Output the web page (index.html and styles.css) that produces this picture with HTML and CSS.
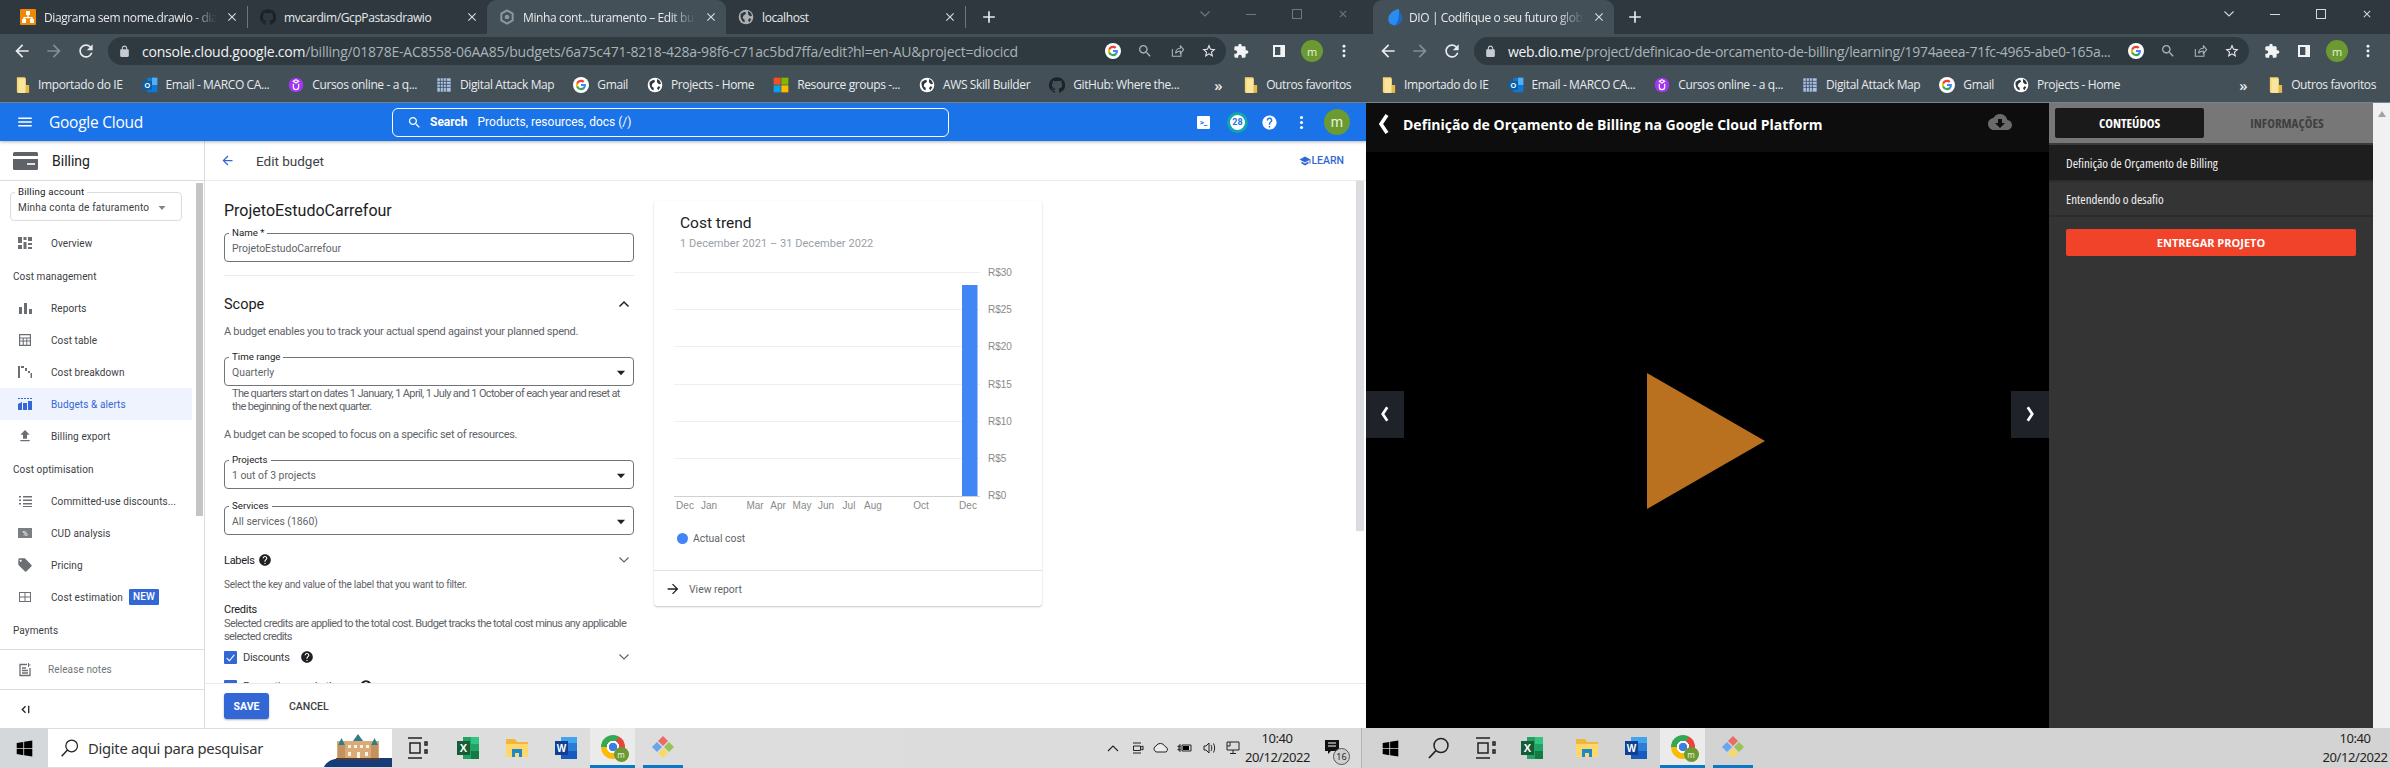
FILE: index.html
```html
<!DOCTYPE html>
<html lang="pt-BR">
<head>
  <meta charset="UTF-8" />
  <title>Billing - DIO</title>
  <link rel="stylesheet" href="styles.css">
</head>
<body>

  <!-- shared icons -->
  <svg class="sprite" width="0" height="0">
    <symbol id="i-menu" viewBox="0 0 24 24"><path d="M3 18h18v-2H3v2zm0-5h18v-2H3v2zm0-7v2h18V6H3z"/></symbol>
    <symbol id="i-back" viewBox="0 0 24 24"><path d="M20 11H7.83l5.59-5.59L12 4l-8 8 8 8 1.41-1.41L7.83 13H20v-2z"/></symbol>
    <symbol id="i-forward" viewBox="0 0 24 24"><path d="M12 4l-1.41 1.41L16.17 11H4v2h12.17l-5.58 5.59L12 20l8-8z"/></symbol>
    <symbol id="i-reload" viewBox="0 0 24 24"><path d="M17.65 6.35A7.958 7.958 0 0 0 12 4c-4.42 0-7.99 3.58-7.99 8s3.57 8 7.99 8c3.73 0 6.84-2.55 7.73-6h-2.08A5.99 5.99 0 0 1 12 18c-3.31 0-6-2.69-6-6s2.69-6 6-6c1.66 0 3.14.69 4.22 1.78L13 11h7V4l-2.35 2.35z"/></symbol>
    <symbol id="i-lock" viewBox="0 0 24 24"><path d="M18 8h-1V6c0-2.76-2.24-5-5-5S7 3.24 7 6v2H6c-1.1 0-2 .9-2 2v10c0 1.1.9 2 2 2h12c1.1 0 2-.9 2-2V10c0-1.1-.9-2-2-2zM9 6c0-1.66 1.34-3 3-3s3 1.34 3 3v2H9V6z"/></symbol>
    <symbol id="i-close" viewBox="0 0 24 24"><path d="M19 6.41L17.59 5 12 10.59 6.41 5 5 6.41 10.59 12 5 17.59 6.41 19 12 13.41 17.59 19 19 17.59 13.41 12z"/></symbol>
    <symbol id="i-plus" viewBox="0 0 24 24"><path d="M19 13h-6v6h-2v-6H5v-2h6V5h2v6h6v2z"/></symbol>
    <symbol id="i-star" viewBox="0 0 24 24"><path d="M22 9.24l-7.19-.62L12 2 9.19 8.63 2 9.24l5.46 4.73L5.82 21 12 17.27 18.18 21l-1.63-7.03L22 9.24zM12 15.4l-3.76 2.27 1-4.28-3.32-2.88 4.38-.38L12 6.1l1.71 4.04 4.38.38-3.32 2.88 1 4.28L12 15.4z"/></symbol>
    <symbol id="i-puzzle" viewBox="0 0 24 24"><path d="M20.5 11H19V7c0-1.1-.9-2-2-2h-4V3.5C13 2.12 11.88 1 10.5 1S8 2.12 8 3.5V5H4c-1.1 0-1.99.9-1.99 2v3.8H3.5c1.49 0 2.7 1.21 2.7 2.7s-1.21 2.7-2.7 2.7H2V20c0 1.1.9 2 2 2h3.8v-1.5c0-1.49 1.21-2.7 2.7-2.7 1.49 0 2.7 1.21 2.7 2.7V22H17c1.1 0 2-.9 2-2v-4h1.5c1.38 0 2.5-1.12 2.5-2.5S21.88 11 20.5 11z"/></symbol>
    <symbol id="i-search" viewBox="0 0 24 24"><path d="M15.5 14h-.79l-.28-.27C15.41 12.59 16 11.11 16 9.5 16 5.91 13.09 3 9.5 3S3 5.91 3 9.5 5.91 16 9.5 16c1.61 0 3.09-.59 4.23-1.57l.27.28v.79l5 4.99L20.49 19l-4.99-5zm-6 0C7.01 14 5 11.99 5 9.5S7.01 5 9.5 5 14 7.01 14 9.5 11.99 14 9.5 14z"/></symbol>
    <symbol id="i-share" viewBox="0 0 24 24"><path d="M5 9v11h13v-5M10 15c0-4 3-7 7-7V4l5 6-5 6v-4c-3 0-5 1-7 3z" fill="none" stroke="currentColor" stroke-width="1.6" stroke-linejoin="round"/></symbol>
    <symbol id="i-panel" viewBox="0 0 24 24"><path d="M3 3h18v18H3zM14 6H6v12h8z" fill-rule="evenodd"/></symbol>
    <symbol id="i-dots" viewBox="0 0 24 24"><circle cx="12" cy="5" r="2.2"/><circle cx="12" cy="12" r="2.2"/><circle cx="12" cy="19" r="2.2"/></symbol>
    <symbol id="i-folder" viewBox="0 0 16 20"><path fill="#f6d776" d="M1 1h9l1 1v17H2l-1-1z"/><path fill="#e8b94a" d="M11 10l4 0v9H11z"/><path fill="#fbe59a" d="M3 3h8v16H3z"/></symbol>
    <symbol id="i-outlook" viewBox="0 0 24 24"><rect x="8" y="1" width="15" height="22" rx="1" fill="#0f78d4"/><rect x="15" y="1" width="8" height="11" fill="#50b0f0"/><rect x="1" y="6" width="14" height="13" fill="#0a5fa8"/><text x="8" y="16" text-anchor="middle" font-size="11" font-weight="700" fill="#fff" font-family="Liberation Sans">O</text></symbol>
    <symbol id="i-udemy" viewBox="0 0 24 24"><circle cx="12" cy="12" r="11" fill="#a435f0"/><path d="M8 10v5a4 4 0 0 0 8 0v-5M12 4l4 2.5-4 2.5-4-2.5z" fill="none" stroke="#fff" stroke-width="1.8"/></symbol>
    <symbol id="i-grid" viewBox="0 0 24 24"><path d="M2 2h20v20H2z" fill="#a9c4ea"/><path d="M6.5 2v20M11 2v20M15.5 2v20M2 6.5h20M2 11h20M2 15.5h20" stroke="#435058" stroke-width="1.3"/></symbol>
    <symbol id="i-g" viewBox="0 0 24 24"><circle cx="12" cy="12" r="12" fill="#fff"/><g transform="translate(3.6 3.6) scale(.7)"><path fill="#4285F4" d="M22.56 12.25c0-.78-.07-1.53-.2-2.25H12v4.26h5.92c-.26 1.37-1.04 2.53-2.21 3.31v2.77h3.57c2.08-1.92 3.28-4.74 3.28-8.09z"/><path fill="#34A853" d="M12 23c2.97 0 5.46-.98 7.28-2.66l-3.57-2.77c-.98.66-2.23 1.06-3.71 1.06-2.86 0-5.29-1.93-6.16-4.53H2.18v2.84C3.99 20.53 7.7 23 12 23z"/><path fill="#FBBC05" d="M5.84 14.09c-.22-.66-.35-1.36-.35-2.09s.13-1.43.35-2.09V7.07H2.18C1.43 8.55 1 10.22 1 12s.43 3.45 1.18 4.93l3.66-2.84z"/><path fill="#EA4335" d="M12 5.38c1.62 0 3.06.56 4.21 1.64l3.15-3.15C17.45 2.09 14.97 1 12 1 7.7 1 3.99 3.47 2.18 7.07l3.66 2.84c.87-2.6 3.3-4.53 6.16-4.53z"/></g></symbol>
    <symbol id="i-globe" viewBox="0 0 24 24"><circle cx="12" cy="12" r="11" fill="#fff"/><path fill="#2e383e" d="M4 7c3-1 4-3 7-3l1 3-4 3-1 4 3 2v4c-4-1-7-6-6-13zM15 3c3 1 5 3 6 7l-3 1-3-3zM17 14l3 1-3 5-2-3z"/></symbol>
    <symbol id="i-github" viewBox="0 0 24 24"><path d="M12 .3a12 12 0 0 0-3.8 23.4c.6.1.8-.3.8-.6v-2.2c-3.3.7-4-1.4-4-1.4-.6-1.4-1.4-1.8-1.4-1.8-1-.7.1-.7.1-.7 1.2.1 1.9 1.2 1.9 1.2 1.1 1.8 2.8 1.3 3.5 1 .1-.8.4-1.3.8-1.6-2.7-.3-5.5-1.3-5.5-6 0-1.2.5-2.3 1.3-3.1-.2-.4-.6-1.6 0-3.2 0 0 1-.3 3.4 1.2a11.5 11.5 0 0 1 6 0c2.3-1.5 3.3-1.2 3.3-1.2.6 1.6.2 2.8.1 3.2.8.8 1.3 1.9 1.3 3.2 0 4.6-2.8 5.6-5.5 5.9.5.4.9 1 .9 2.2v3.3c0 .3.2.7.8.6A12 12 0 0 0 12 .3z"/></symbol>
    <symbol id="i-ms" viewBox="0 0 24 24"><path fill="#f25022" d="M1 1h10.5v10.5H1z"/><path fill="#7fba00" d="M12.5 1H23v10.5H12.5z"/><path fill="#00a4ef" d="M1 12.5h10.5V23H1z"/><path fill="#ffb900" d="M12.5 12.5H23V23H12.5z"/></symbol>
    <symbol id="i-help" viewBox="0 0 24 24"><path d="M12 2C6.48 2 2 6.48 2 12s4.48 10 10 10 10-4.48 10-10S17.52 2 12 2zm1 17h-2v-2h2v2zm2.07-7.75l-.9.92C13.45 12.9 13 13.5 13 15h-2v-.5c0-1.1.45-2.1 1.17-2.83l1.24-1.26c.37-.36.59-.86.59-1.41 0-1.1-.9-2-2-2s-2 .9-2 2H8c0-2.21 1.79-4 4-4s4 1.79 4 4c0 .88-.36 1.68-.93 2.25z"/></symbol>
    <symbol id="i-caret" viewBox="0 0 24 24"><path d="M5 8h14l-7 8z"/></symbol>
    <symbol id="i-chev-down" viewBox="0 0 24 24"><path d="M3 7l9 9 9-9" fill="none" stroke="currentColor" stroke-width="2.2"/></symbol>
    <symbol id="i-chev-up" viewBox="0 0 24 24"><path d="M3 17l9-9 9 9" fill="none" stroke="currentColor" stroke-width="3"/></symbol>
    <symbol id="i-left" viewBox="0 0 12 24"><path d="M9 3L3 12l6 9" fill="none" stroke="currentColor" stroke-width="3.6"/></symbol>
    <symbol id="i-right" viewBox="0 0 12 24"><path d="M3 3l6 9-6 9" fill="none" stroke="currentColor" stroke-width="3.6"/></symbol>
    <symbol id="i-win" viewBox="0 0 24 24"><path d="M1 4.200l9.300-1.500v8.800H1zM11.500 2.500L23 .8v10.700H11.500zM1 12.600h9.300v8.800L1 19.900zM11.500 12.600H23v10.600l-11.500-1.700z"/></symbol>
    <symbol id="i-lens" viewBox="0 0 24 24"><circle cx="14" cy="9.5" r="7" fill="none" stroke="currentColor" stroke-width="1.5"/><path d="M9 14.5L2 22" stroke="currentColor" stroke-width="1.8"/></symbol>
    <symbol id="i-taskview" viewBox="0 0 24 24"><path d="M3 2h14M3 22h14M5 7h10v10H5zM20 6h2v3h-2zM20 14h2v3h-2z" fill="none" stroke="currentColor" stroke-width="1.5"/></symbol>
    <symbol id="i-excel" viewBox="0 0 24 24"><path fill="#21a366" d="M7 1h16v22H7z"/><path fill="#33c481" d="M15 1h8v7h-8z"/><path fill="#107c41" d="M15 15h8v8h-8z"/><path fill="#185c37" d="M1 5h13v14H1z"/><text x="7.5" y="16" text-anchor="middle" font-size="11" font-weight="700" fill="#fff" font-family="Liberation Sans">X</text></symbol>
    <symbol id="i-word" viewBox="0 0 24 24"><path fill="#2b7cd3" d="M7 1h16v22H7z"/><path fill="#41a5ee" d="M7 1h16v6H7z"/><path fill="#185abd" d="M7 15h16v8H7z"/><path fill="#103f91" d="M1 5h13v14H1z"/><text x="7.5" y="16" text-anchor="middle" font-size="10" font-weight="700" fill="#fff" font-family="Liberation Sans">W</text></symbol>
    <symbol id="i-explorer" viewBox="0 0 24 24"><path fill="#f0b73b" d="M1 3h9l2 3h11v15H1z"/><path fill="#ffd86b" d="M1 8h22v13H1z"/><path fill="#1e88c9" d="M7 13h10v8h-3v-4h-4v4H7z"/></symbol>
    <symbol id="i-gapp" viewBox="0 0 24 24"><path fill="#ea6b66" d="M12 1l5 5-5 5-5-5z"/><path fill="#6aa5ed" d="M6 7l5 5-5 5-5-5z"/><path fill="#97c459" d="M18 7l5 5-5 5-5-5z"/><path fill="#f6d96b" d="M12 13l5 5-5 5-5-5z"/></symbol>
    <symbol id="i-drawio" viewBox="0 0 24 24"><rect width="24" height="24" rx="1.5" fill="#f08705"/><path d="M9 3h6v6h-2v3h6v3h2v6h-6v-6h2v-1H7v1h2v6H3v-6h2v-3h6V9H9z" fill="#fff"/></symbol>
    <symbol id="i-gcp" viewBox="0 0 24 24"><path d="M12 2l8.500 5v10L12 22l-8.500-5V7z" fill="none" stroke="currentColor" stroke-width="3"/><circle cx="12" cy="12" r="3.500" fill="currentColor"/></symbol>
    <symbol id="i-dio" viewBox="0 0 24 24"><path fill="#2b8cf0" d="M17 1C10 3 3 8 3 15c0 5 4 8 9 8s9-4 9-9c0-5-3-7-4-13z"/><path fill="#1b64c8" d="M17 1c1 6 4 8 4 13 0 5-4 9-9 9 5-4 6-14 5-22z"/></symbol>
  </svg>

  <div class="screen">

    <!-- janela esquerda -->
    <section class="window">
      <div class="tabstrip tabstrip-left">
        <div class="tab">
          <svg class="favicon"><use href="#i-drawio"/></svg>
          <span class="tab-title tab-fade">Diagrama sem nome.drawio - dia</span>
          <svg class="tab-close"><use href="#i-close"/></svg>
        </div>
        <span class="tab-sep"></span>
        <div class="tab">
          <svg class="favicon fav-dark"><use href="#i-github"/></svg>
          <span class="tab-title">mvcardim/GcpPastasdrawio</span>
          <svg class="tab-close"><use href="#i-close"/></svg>
        </div>
        <div class="tab tab-active">
          <svg class="favicon fav-gray"><use href="#i-gcp"/></svg>
          <span class="tab-title tab-fade">Minha cont...turamento – Edit bu</span>
          <svg class="tab-close"><use href="#i-close"/></svg>
        </div>
        <div class="tab">
          <svg class="favicon fav-dim"><use href="#i-globe"/></svg>
          <span class="tab-title">localhost</span>
          <svg class="tab-close"><use href="#i-close"/></svg>
        </div>
        <span class="tab-sep"></span>
        <svg class="tab-new"><use href="#i-plus"/></svg>
        <div class="win-controls win-dim">
          <svg class="win-btn"><use href="#i-chev-down"/></svg>
          <span class="win-min"></span>
          <span class="win-max"></span>
          <svg class="win-btn"><use href="#i-close"/></svg>
        </div>
      </div>

      <div class="toolbar">
        <svg class="nav-ic"><use href="#i-back"/></svg>
        <svg class="nav-ic nav-off"><use href="#i-forward"/></svg>
        <svg class="nav-ic"><use href="#i-reload"/></svg>
        <div class="omnibox">
          <svg class="omni-lock"><use href="#i-lock"/></svg>
          <span class="url"><b>console.cloud.google.com</b>/billing/01878E-AC8558-06AA85/budgets/6a75c471-8218-428a-98f6-c71ac5bd7ffa/edit?hl=en-AU&amp;project=diocicd</span>
          <svg class="omni-ic"><use href="#i-g"/></svg>
          <svg class="omni-ic omni-dim"><use href="#i-search"/></svg>
          <svg class="omni-ic omni-dim"><use href="#i-share"/></svg>
          <svg class="omni-ic"><use href="#i-star"/></svg>
        </div>
        <svg class="tool-ic tool-puzzle"><use href="#i-puzzle"/></svg>
        <svg class="tool-ic tool-panel"><use href="#i-panel"/></svg>
        <span class="avatar">m</span>
        <svg class="tool-ic tool-dots"><use href="#i-dots"/></svg>
      </div>

      <div class="bookmarks">
        <svg class="bm-folder"><use href="#i-folder"/></svg><span class="bm-text bm-first">Importado do IE</span>
        <svg class="bm-ic"><use href="#i-outlook"/></svg><span class="bm-text">Email - MARCO CA...</span>
        <svg class="bm-ic"><use href="#i-udemy"/></svg><span class="bm-text">Cursos online - a q...</span>
        <svg class="bm-ic"><use href="#i-grid"/></svg><span class="bm-text">Digital Attack Map</span>
        <svg class="bm-ic"><use href="#i-g"/></svg><span class="bm-text">Gmail</span>
        <svg class="bm-ic"><use href="#i-globe"/></svg><span class="bm-text">Projects - Home</span>
        <svg class="bm-ic"><use href="#i-ms"/></svg><span class="bm-text">Resource groups -...</span>
        <svg class="bm-ic"><use href="#i-globe"/></svg><span class="bm-text">AWS Skill Builder</span>
        <svg class="bm-ic"><use href="#i-github"/></svg><span class="bm-text">GitHub: Where the...</span>
        <span class="bm-more">»</span>
        <span class="bm-sep"></span>
        <svg class="bm-folder"><use href="#i-folder"/></svg><span class="bm-text">Outros favoritos</span>
      </div>

      <div class="gcp">
        <header class="gcp-top">
          <svg class="gcp-menu"><use href="#i-menu"/></svg>
          <span class="gcp-logo">Google Cloud</span>
          <div class="gcp-search">
            <svg class="gcp-search-ic"><use href="#i-search"/></svg>
            <b>Search</b><span>Products, resources, docs (/)</span>
          </div>
          <div class="gcp-actions">
            <span class="gcp-term">&gt;_</span>
            <span class="gcp-badge">28</span>
            <svg class="gcp-ic"><use href="#i-help"/></svg>
            <svg class="gcp-ic"><use href="#i-dots"/></svg>
            <span class="gcp-avatar">m</span>
          </div>
        </header>

        <div class="gcp-body">
          <aside class="sidebar">
            <div class="side-head">
              <svg class="side-head-ic" viewBox="0 0 25 18"><rect width="25" height="18" rx="1.500" fill="#5f6368"/><rect y="4" width="25" height="3" fill="#fff"/><rect x="14" y="11" width="8" height="2" fill="#fff" opacity=".8"/></svg>
              <span>Billing</span>
            </div>
            <div class="side-scroll">
              <div class="side-list">
                <div class="field field-account">
                  <span class="field-label">Billing account</span>
                  <span class="field-value">Minha conta de faturamento</span>
                  <svg class="caret caret-gray"><use href="#i-caret"/></svg>
                </div>
                <a class="side-item">
                  <svg class="side-ic" viewBox="0 0 16 16"><path d="M1 2h4v6H1zM1 10h4v4H1zM6.500 2h3v3h-3zM6.500 7h3v7h-3zM11 2h4v4h-4zM11 8h4v2h-4zM11 12h4v2h-4z"/></svg>Overview</a>
                <div class="side-group">Cost management</div>
                <a class="side-item">
                  <svg class="side-ic" viewBox="0 0 16 16"><path d="M2 7h3v7H2zM7 3h3v11H7zM12 9h3v5h-3z"/></svg>Reports</a>
                <a class="side-item">
                  <svg class="side-ic" viewBox="0 0 16 16"><path fill-rule="evenodd" d="M2 2h12v12H2zM3.200 3.200v2.200h9.600V3.200zM3.200 6.500v2h2.500v-2zm3.600 0v2h2.500v-2zm3.500 0v2h2.500v-2zM3.200 9.500v3.300h2.500V9.500zm3.600 0v3.300h2.500V9.500zm3.500 0v3.300h2.500V9.500z"/></svg>Cost table</a>
                <a class="side-item">
                  <svg class="side-ic" viewBox="0 0 16 16"><path d="M1 2h2v12H1zM4 2h3v2H4zM8 4h2v3H8zM11 7h2v2h-2zM13.500 9H15v5h-1.500z"/></svg>Cost breakdown</a>
                <a class="side-item side-active">
                  <svg class="side-ic" viewBox="0 0 16 16"><path d="M1 8l4-2v8H1zM6 7h4v7H6zM11 5h4v9h-4zM1 2h2v1H1zM4 2h2v1H4zM7 2h2v1H7zM10 2h2v1h-2zM13 2h2v1h-2z"/></svg>Budgets &amp; alerts</a>
                <a class="side-item">
                  <svg class="side-ic" viewBox="0 0 24 24"><path d="M9 16h6v-6h4l-7-7-7 7h4zm-4 2h14v2H5z"/></svg>Billing export</a>
                <div class="side-group">Cost optimisation</div>
                <a class="side-item">
                  <svg class="side-ic" viewBox="0 0 16 16"><path d="M2 3h2v1.500H2zM6 3h9v1.500H6zM2 6.500h2V8H2zM6 6.500h9V8H6zM2 10h2v1.500H2zM6 10h9v1.500H6zM6 13h9v1H6z"/></svg>Committed-use discounts...</a>
                <a class="side-item">
                  <svg class="side-ic" viewBox="0 0 16 16"><rect x="1" y="3" width="14" height="10" fill="#7b7e82"/><text x="8" y="11" text-anchor="middle" font-size="7.500" fill="#fff" font-family="Roboto">%</text></svg>CUD analysis</a>
                <a class="side-item">
                  <svg class="side-ic" viewBox="0 0 24 24"><path d="M21.410 11.580l-9-9C12.050 2.220 11.550 2 11 2H4c-1.100 0-2 .9-2 2v7c0 .55.22 1.050.59 1.420l9 9c.36.36.86.58 1.410.58.55 0 1.050-.22 1.410-.59l7-7c.37-.36.59-.86.59-1.410 0-.55-.23-1.060-.59-1.420zM5.500 7C4.670 7 4 6.330 4 5.500S4.670 4 5.500 4 7 4.670 7 5.500 6.330 7 5.500 7z"/></svg>Pricing</a>
                <a class="side-item">
                  <svg class="side-ic" viewBox="0 0 16 16"><path fill-rule="evenodd" d="M2 3h12v10H2zM3 4v3.500h4.500V4zm5.500 0v3.500H13V4zM3 8.500V12h4.500V8.500zm5.500 0V12H13V8.500z"/></svg>Cost estimation<span class="badge-new">NEW</span></a>
                <div class="side-group">Payments</div>
              </div>
              <div class="side-thumb"></div>
            </div>
            <a class="side-foot side-notes">
              <svg class="side-ic" viewBox="0 0 16 16"><path fill="none" stroke="currentColor" stroke-width="1.300" d="M10 2.500H3v11h10V6M5 6h4M5 8.500h6M5 11h6"/><path d="M12 1v1.500h1.500v1H12V5h-1V1z"/></svg>Release notes</a>
            <div class="side-foot side-collapse"><svg class="collapse-ic" viewBox="0 0 12 12"><path d="M6 2.500L2.500 6 6 9.500M9.500 2v8" fill="none" stroke="currentColor" stroke-width="1.400"/></svg></div>
          </aside>

          <main class="main">
            <div class="main-head">
              <svg class="main-back"><use href="#i-back"/></svg>
              <span class="main-title">Edit budget</span>
              <a class="learn"><svg class="learn-ic" viewBox="0 0 24 24"><path d="M5 13.180v4L12 21l7-3.820v-4L12 17l-7-3.820zM12 3L1 9l11 6 9-4.910V17h2V9L12 3z"/></svg>LEARN</a>
            </div>

            <div class="main-scroll">
              <form class="budget-form">
                <h1 class="form-title">ProjetoEstudoCarrefour</h1>
                <div class="field field-name">
                  <span class="field-label">Name *</span>
                  <span class="field-value">ProjetoEstudoCarrefour</span>
                </div>
                <hr class="form-line">
                <div class="row-between scope-head">
                  <h2 class="scope-title">Scope</h2>
                  <svg class="chev chev-up"><use href="#i-chev-up"/></svg>
                </div>
                <p class="form-text scope-text">A budget enables you to track your actual spend against your planned spend.</p>
                <div class="field field-time">
                  <span class="field-label">Time range</span>
                  <span class="field-value">Quarterly</span>
                  <svg class="caret"><use href="#i-caret"/></svg>
                </div>
                <p class="form-hint">The quarters start on dates 1 January, 1 April, 1 July and 1 October of each year and reset at the beginning of the next quarter.</p>
                <p class="form-text scoped-text">A budget can be scoped to focus on a specific set of resources.</p>
                <div class="field field-projects">
                  <span class="field-label">Projects</span>
                  <span class="field-value">1 out of 3 projects</span>
                  <svg class="caret"><use href="#i-caret"/></svg>
                </div>
                <div class="field field-services">
                  <span class="field-label">Services</span>
                  <span class="field-value">All services (1860)</span>
                  <svg class="caret"><use href="#i-caret"/></svg>
                </div>
                <div class="row-between labels-row">
                  <span class="labels-title">Labels <svg class="help"><use href="#i-help"/></svg></span>
                  <svg class="chev"><use href="#i-chev-down"/></svg>
                </div>
                <p class="form-text labels-text">Select the key and value of the label that you want to filter.</p>
                <div class="credits-title">Credits</div>
                <p class="form-credit">Selected credits are applied to the total cost. Budget tracks the total cost minus any applicable selected credits</p>
                <div class="row-between check-row">
                  <span class="check-label"><span class="check"><svg viewBox="0 0 12 12"><path d="M2.500 6.500l2.500 2.500 4.500-5.500" fill="none" stroke="#fff" stroke-width="1"/></svg></span>Discounts<svg class="help help-gap"><use href="#i-help"/></svg></span>
                  <svg class="chev"><use href="#i-chev-down"/></svg>
                </div>
                <div class="row-between check-row check-next">
                  <span class="check-label"><span class="check"></span>Promotions and others<svg class="help help-gap"><use href="#i-help"/></svg></span>
                  <svg class="chev"><use href="#i-chev-down"/></svg>
                </div>
              </form>

              <div class="trend-card">
                <h3 class="trend-title">Cost trend</h3>
                <div class="trend-date">1 December 2021 – 31 December 2022</div>
                <svg class="trend-chart" viewBox="0 0 388 250" width="388" height="250">
                  <g stroke="#efefef"><path d="M20 4.500h306M20 41.500h306M20 78.500h306M20 116.500h306M20 153.500h306M20 190.500h306"/></g>
                  <path d="M20 228.500h306" stroke="#d0d0d0"/>
                  <rect x="308" y="17" width="15.500" height="211" fill="#4285f4"/>
                  <g class="axis-y">
                    <text x="334" y="8">R$30</text><text x="334" y="45">R$25</text><text x="334" y="82">R$20</text>
                    <text x="334" y="120">R$15</text><text x="334" y="157">R$10</text><text x="334" y="194">R$5</text><text x="334" y="231">R$0</text>
                  </g>
                  <g class="axis-x">
                    <text x="31" y="241">Dec</text><text x="55" y="241">Jan</text><text x="101" y="241">Mar</text><text x="124" y="241">Apr</text><text x="148" y="241">May</text>
                    <text x="172" y="241">Jun</text><text x="195" y="241">Jul</text><text x="219" y="241">Aug</text><text x="267" y="241">Oct</text><text x="314" y="241">Dec</text>
                  </g>
                </svg>
                <div class="trend-legend"><span class="legend-dot"></span>Actual cost</div>
                <div class="trend-foot">
                  <svg class="trend-arrow"><use href="#i-forward"/></svg>
                  <span>View report</span>
                </div>
              </div>

              <div class="main-thumb"></div>
            </div>

            <div class="main-foot">
              <button class="btn-save" type="button">SAVE</button>
              <button class="btn-cancel" type="button">CANCEL</button>
            </div>
          </main>
        </div>
      </div>
    </section>

    <!-- janela direita -->
    <section class="window window-right">
      <div class="tabstrip tabstrip-right">
        <div class="tab tab-active tab-dio">
          <svg class="favicon"><use href="#i-dio"/></svg>
          <span class="tab-title tab-fade">DIO | Codifique o seu futuro glob</span>
          <svg class="tab-close"><use href="#i-close"/></svg>
        </div>
        <svg class="tab-new tab-new-dio"><use href="#i-plus"/></svg>
        <div class="win-controls">
          <svg class="win-btn"><use href="#i-chev-down"/></svg>
          <span class="win-min"></span>
          <span class="win-max"></span>
          <svg class="win-btn"><use href="#i-close"/></svg>
        </div>
      </div>

      <div class="toolbar">
        <svg class="nav-ic"><use href="#i-back"/></svg>
        <svg class="nav-ic nav-off"><use href="#i-forward"/></svg>
        <svg class="nav-ic"><use href="#i-reload"/></svg>
        <div class="omnibox">
          <svg class="omni-lock"><use href="#i-lock"/></svg>
          <span class="url"><b>web.dio.me</b>/project/definicao-de-orcamento-de-billing/learning/1974aeea-71fc-4965-abe0-165a...</span>
          <svg class="omni-ic"><use href="#i-g"/></svg>
          <svg class="omni-ic omni-dim"><use href="#i-search"/></svg>
          <svg class="omni-ic omni-dim"><use href="#i-share"/></svg>
          <svg class="omni-ic"><use href="#i-star"/></svg>
        </div>
        <svg class="tool-ic tool-puzzle"><use href="#i-puzzle"/></svg>
        <svg class="tool-ic tool-panel"><use href="#i-panel"/></svg>
        <span class="avatar">m</span>
        <svg class="tool-ic tool-dots"><use href="#i-dots"/></svg>
      </div>

      <div class="bookmarks">
        <svg class="bm-folder"><use href="#i-folder"/></svg><span class="bm-text bm-first">Importado do IE</span>
        <svg class="bm-ic"><use href="#i-outlook"/></svg><span class="bm-text">Email - MARCO CA...</span>
        <svg class="bm-ic"><use href="#i-udemy"/></svg><span class="bm-text">Cursos online - a q...</span>
        <svg class="bm-ic"><use href="#i-grid"/></svg><span class="bm-text">Digital Attack Map</span>
        <svg class="bm-ic"><use href="#i-g"/></svg><span class="bm-text">Gmail</span>
        <svg class="bm-ic"><use href="#i-globe"/></svg><span class="bm-text">Projects - Home</span>
        <span class="bm-more">»</span>
        <span class="bm-sep"></span>
        <svg class="bm-folder"><use href="#i-folder"/></svg><span class="bm-text">Outros favoritos</span>
      </div>

      <div class="dio">
        <div class="dio-player">
          <div class="dio-head">
            <svg class="dio-back"><use href="#i-left"/></svg>
            <span class="dio-title">Definição de Orçamento de Billing na Google Cloud Platform</span>
            <svg class="dio-cloud" viewBox="0 0 24 24"><path d="M19.350 10.040C18.670 6.590 15.640 4 12 4 9.110 4 6.600 5.640 5.350 8.040 2.340 8.360 0 10.910 0 14c0 3.310 2.690 6 6 6h13c2.760 0 5-2.240 5-5 0-2.640-2.050-4.780-4.650-4.960zM17 13l-5 5-5-5h3V9h4v4h3z"/></svg>
          </div>
          <div class="dio-video">
            <button class="dio-arrow" type="button"><svg><use href="#i-left"/></svg></button>
            <div class="dio-play"></div>
            <button class="dio-arrow" type="button"><svg><use href="#i-right"/></svg></button>
          </div>
        </div>
        <aside class="dio-side">
          <div class="dio-tabs">
            <span class="dio-tab dio-tab-on">CONTEÚDOS</span>
            <span class="dio-tab">INFORMAÇÕES</span>
          </div>
          <div class="dio-row dio-row-on">Definição de Orçamento de Billing</div>
          <div class="dio-row">Entendendo o desafio</div>
          <button class="dio-submit" type="button">ENTREGAR PROJETO</button>
        </aside>
        <div class="dio-scrollbar"><span class="dio-scroll-up"></span></div>
      </div>
    </section>

    <!-- barra de tarefas -->
    <footer class="taskbar">
      <div class="task-start"><svg class="task-win"><use href="#i-win"/></svg></div>
      <div class="task-search">
        <svg class="task-lens"><use href="#i-lens"/></svg>
        <span>Digite aqui para pesquisar</span>
        <svg class="task-art" viewBox="0 0 68 38" width="68" height="38">
          <path d="M0 38c3-7 12-9 20-9h48v9z" fill="#173a78"/>
          <path d="M13 12h42v19H13z" fill="#d9ab7a"/>
          <path d="M12 29h44v2H12z" fill="#4c3e35"/>
          <path d="M14 16h7v13h-7zM47 16h7v13h-7z" fill="#c4925f"/>
          <path d="M14 16l3.500-7 3.500 7zM47 16l3.500-7 3.500 7zM29 12l5-7 5 7z" fill="#2c7f85"/>
          <path d="M24 16h3v3h-3zM30 16h3v3h-3zM36 16h3v3h-3zM42 16h3v3h-3zM24 23h3v4h-3zM33 23h3v6h-3zM41 23h3v4h-3z" fill="#fff3df"/>
        </svg>
      </div>
      <span class="task-item"><svg class="task-ic task-line"><use href="#i-taskview"/></svg></span>
      <span class="task-item task-gap"><svg class="task-ic"><use href="#i-excel"/></svg></span>
      <span class="task-item"><svg class="task-ic"><use href="#i-explorer"/></svg></span>
      <span class="task-item"><svg class="task-ic"><use href="#i-word"/></svg></span>
      <span class="task-item task-chrome"><span class="chrome-logo"><span class="chrome-badge">m</span></span></span>
      <span class="task-item task-app"><svg class="task-ic"><use href="#i-gapp"/></svg></span>

      <div class="tray">
        <svg class="tray-ic" viewBox="0 0 16 16"><path d="M3 11l5-5 5 5" fill="none" stroke="currentColor" stroke-width="1.100"/></svg>
        <svg class="tray-ic" viewBox="0 0 16 16"><path d="M4 3h8M4 13h8M4.500 6h7v4.500h-7zM12 7l2-1v4l-2-1" fill="none" stroke="currentColor"/></svg>
        <svg class="tray-ic" viewBox="0 0 16 16"><path d="M2 11a3 3 0 0 1 1-5 5 5 0 0 1 9 .5A3 3 0 0 1 13 12H4a2 2 0 0 1-2-1z" fill="#ececec" stroke="currentColor"/></svg>
        <svg class="tray-ic" viewBox="0 0 16 16"><path d="M5 5h9v6H5zM1 6h2v1H1zM1 9h2v1H1zM3 4v8" fill="none" stroke="currentColor"/><path d="M6 6h6v4H6z"/></svg>
        <svg class="tray-ic" viewBox="0 0 16 16"><path d="M3 6h2l3-3v10l-3-3H3zM10 5c1 2 1 4 0 6M12.500 3.500c1.500 3 1.500 6 0 9" fill="none" stroke="currentColor"/></svg>
        <svg class="tray-ic" viewBox="0 0 16 16"><path d="M2 2h3v4H2zM5 2h9v8H2V6M8 10v3M5 13.500h6" fill="none" stroke="currentColor"/></svg>
      </div>
      <div class="task-clock">10:40<br>20/12/2022</div>
      <div class="task-notify"><svg class="notify-ic" viewBox="0 0 16 16"><path d="M1 1h14v11H7l-3 3v-3H1z"/><path d="M4 4h8M4 7h8" stroke="#fff"/></svg><span class="notify-count">16</span></div>

      <div class="task-second">
        <div class="task-start task-start-2"><svg class="task-win"><use href="#i-win"/></svg></div>
        <span class="task-item task-item-2"><svg class="task-ic task-line"><use href="#i-lens"/></svg></span>
        <span class="task-item task-item-3"><svg class="task-ic task-line"><use href="#i-taskview"/></svg></span>
        <span class="task-item"><svg class="task-ic"><use href="#i-excel"/></svg></span>
        <span class="task-item task-gap-b"><svg class="task-ic"><use href="#i-explorer"/></svg></span>
        <span class="task-item"><svg class="task-ic"><use href="#i-word"/></svg></span>
        <span class="task-item task-chrome"><span class="chrome-logo"><span class="chrome-badge">m</span></span></span>
        <span class="task-item task-app"><svg class="task-ic"><use href="#i-gapp"/></svg></span>
        <div class="task-clock task-clock-2">10:40<br>20/12/2022</div>
      </div>
    </footer>
  </div>

</body>
</html>
```

FILE: styles.css
```css
* { box-sizing: border-box; }
html, body { margin: 0; height: 100%; overflow: hidden; }
body { font-family: 'Roboto', sans-serif; color: #3c4043; background: #000; }
.sprite { position: absolute; }
h1, h2, h3, p { margin: 0; font-weight: 400; }
button { font-family: inherit; border: none; padding: 0; cursor: pointer; }
a { color: inherit; text-decoration: none; }

.screen {
  display: grid;
  grid-template-columns: 1366px 1024px;
  grid-template-rows: 728px 40px;
  width: 2390px;
  height: 768px;
}

.window {
  display: flex;
  flex-direction: column;
  min-width: 0;
  background: #435058;
  overflow: hidden;
}

/* browser chrome */
.tabstrip {
  display: flex;
  align-items: flex-end;
  height: 34px;
  background: #2e383e;
  font-family: 'Open Sans', sans-serif;
  font-size: 12px;
  letter-spacing: -.4px;
  color: #e8eaed;
}
.tabstrip-left { padding-left: 8px; }
.tabstrip-right { padding-left: 7px; }

.tab {
  display: flex;
  align-items: center;
  width: 239px;
  height: 34px;
  padding: 0 8px 0 12px;
}
.tab-active { background: #435058; border-radius: 9px 9px 0 0; }
.tab-dio { width: 241px; padding-left: 13px; }
.tab-sep { width: 1px; height: 22px; margin-bottom: 6px; background: #6c777d; }

.favicon { width: 16px; height: 16px; flex: none; margin-right: 8px; }
.fav-dark { fill: #1c2226; }
.fav-gray { color: #8d979c; fill: #8d979c; }
.fav-dim { opacity: .6; }
.tab-dio .favicon { margin-right: 5px; width: 18px; height: 18px; }
.tab-title {
  flex: 1;
  overflow: hidden;
  white-space: nowrap;
}
.tab-fade {
  -webkit-mask-image: linear-gradient(to right, #000 85%, transparent);
  mask-image: linear-gradient(to right, #000 85%, transparent);
}
.tab-close { width: 14px; height: 14px; flex: none; fill: #d5d9dc; margin-left: 8px; }
.tab-new { width: 20px; height: 20px; fill: #e8eaed; margin: 0 0 7px 13px; }
.tab-new-dio { margin-left: 11px; }

.win-controls {
  display: flex;
  align-items: center;
  height: 28px;
  margin-left: auto;
  margin-bottom: 6px;
  color: #d5d9dc;
}
.win-btn { width: 12px; height: 12px; fill: #d5d9dc; margin: 0 17px; }
.win-min { width: 10px; height: 1px; background: currentColor; margin: 0 18px; }
.win-max { width: 10px; height: 10px; border: 1px solid currentColor; margin: 0 18px; }
.win-dim { opacity: .4; }

.toolbar {
  display: flex;
  align-items: center;
  height: 34px;
  padding-left: 12px;
  background: #435058;
}
.nav-ic { width: 20px; height: 20px; flex: none; fill: #e8eaed; margin-right: 12px; }
.nav-off { opacity: .4; }

.omnibox {
  display: flex;
  align-items: center;
  flex: none;
  width: 1118px;
  height: 28px;
  padding: 0 9px 0 10px;
  border-radius: 14px;
  background: #2f3a40;
  font-family: 'Open Sans', sans-serif;
  font-size: 14px;
  letter-spacing: -.22px;
  color: #aab3b8;
}
.window-right .omnibox { width: 775px; letter-spacing: -.32px; }
.omni-lock { width: 13px; height: 13px; fill: #c5cbce; margin-right: 11px; flex: none; }
.url { flex: 1; white-space: nowrap; overflow: hidden; }
.url b { font-weight: 400; color: #f1f3f4; }
.omni-ic { width: 16px; height: 16px; flex: none; fill: #e8eaed; color: #aab3b8; margin-left: 16px; }
.omni-dim { fill: #aab3b8; }

.tool-ic { width: 16px; height: 16px; flex: none; fill: #f1f3f4; }
.tool-puzzle { margin-left: 7px; }
.tool-panel { margin-left: 22px; }
.tool-dots { margin-left: 13px; }
.window-right .tool-puzzle { margin-left: 15px; }
.window-right .tool-panel { margin-left: 16px; }
.window-right .tool-dots { margin-left: 12px; }
.avatar {
  display: flex;
  align-items: center;
  justify-content: center;
  flex: none;
  width: 22px;
  height: 22px;
  margin-left: 14px;
  border-radius: 50%;
  background: #6b9a33;
  color: #e9f3dd;
  font-family: 'Open Sans', sans-serif;
  font-size: 11px;
}

.bookmarks {
  display: flex;
  align-items: center;
  height: 35px;
  padding: 0 0 1px 16px;
  border-bottom: 1px solid #79858c;
  background: #435058;
  font-family: 'Open Sans', sans-serif;
  font-size: 12px;
  letter-spacing: -.38px;
  color: #e8eaed;
}
.bm-folder { width: 14px; height: 18px; flex: none; margin-right: 8px; }
.bm-ic { width: 16px; height: 16px; flex: none; margin-right: 8px; fill: #1c2226; }
.bm-text { margin-right: 19px; white-space: nowrap; }
.bm-more { margin-left: 16px; font-size: 15px; font-weight: 600; }
.window-right .bm-more { margin-left: 100px; }
.bm-sep { width: 1px; height: 22px; margin: 0 12px 0 10px; background: #6c777d; }

/* google cloud */
.gcp { flex: 1; display: flex; flex-direction: column; min-height: 0; background: #fff; }
.gcp-top {
  display: flex;
  align-items: center;
  flex: none;
  height: 38px;
  background: #1a73e8;
  color: #fff;
  box-shadow: 0 1px 3px rgba(60,64,67,.4);
  position: relative;
  z-index: 1;
}
.gcp-menu { width: 18px; height: 18px; flex: none; margin-left: 16px; fill: #fff; }
.gcp-logo { margin-left: 15px; width: 343px; flex: none; font-family: 'Open Sans', sans-serif; font-size: 15.500px; letter-spacing: -.25px; }
.gcp-search {
  display: flex;
  align-items: center;
  width: 557px;
  height: 29px;
  padding-left: 14px;
  border: 1px solid #fff;
  border-radius: 6px;
  font-size: 12px;
}
.gcp-search-ic { width: 15px; height: 15px; fill: #fff; margin-right: 8px; }
.gcp-search b { font-weight: 700; margin-right: 10px; }
.gcp-actions { display: flex; align-items: center; margin-left: auto; padding-right: 16px; }
.gcp-term {
  display: flex; align-items: center; justify-content: center;
  width: 13px; height: 13px; margin-right: 17px;
  background: #fff; border-radius: 1px;
  color: #1a73e8; font-size: 8px; font-weight: 700;
}
.gcp-badge {
  display: flex; align-items: center; justify-content: center;
  width: 21px; height: 21px; margin-right: 13px;
  border: 3px solid #12a4af; border-radius: 50%;
  background: #fff; color: #1a73e8; font-size: 9px; font-weight: 700;
}
.gcp-ic { width: 17px; height: 17px; fill: #fff; margin-right: 15px; }
.gcp-avatar {
  display: flex; align-items: center; justify-content: center;
  width: 26px; height: 26px; margin-left: -1px;
  border-radius: 50%; background: #6b9a33; color: #e9f3dd; font-size: 14px;
}

.gcp-body { flex: 1; display: flex; min-height: 0; }

/* sidebar */
.sidebar {
  display: flex;
  flex-direction: column;
  flex: none;
  width: 205px;
  border-right: 1px solid #dadce0;
  font-size: 10px;
  letter-spacing: .1px;
}
.side-head {
  display: flex;
  align-items: center;
  flex: none;
  height: 40px;
  border-bottom: 1px solid #dadce0;
  padding-left: 13px;
  font-size: 14px;
  letter-spacing: 0;
  color: #202124;
}
.side-head-ic { width: 25px; height: 18px; margin-right: 14px; }
.side-scroll { display: flex; flex: 1; min-height: 0; overflow: hidden; padding-top: 11px; }
.side-list { width: 192px; flex: none; }
.side-thumb { width: 7px; height: 333px; margin: -9px 0 0 4px; background: #c4c4c4; }
.side-item {
  display: flex;
  align-items: center;
  height: 32px;
  padding-left: 17px;
  white-space: nowrap;
}
.side-ic { width: 16px; height: 16px; flex: none; margin-right: 18px; fill: #6b6f74; color: #6b6f74; }
.side-group { display: flex; align-items: center; height: 32px; padding-left: 13px; color: #3c4043; }
.side-item + .side-group { margin-top: 2px; height: 31px; }
.side-active { background: #eef3fd; color: #3367d6; }
.side-active .side-ic { fill: #3367d6; }
.badge-new {
  margin-left: 6px; padding: 0 4px;
  height: 16px; line-height: 16px;
  background: #3367d6; border-radius: 1px;
  color: #fff; font-size: 10px; font-weight: 500;
}
.side-foot { display: flex; align-items: center; flex: none; border-top: 1px solid #dadce0; }
.side-notes { height: 40px; padding-left: 17px; color: #70757a; }
.side-notes .side-ic { margin-right: 15px; }
.side-collapse { height: 39px; padding-left: 20px; }
.collapse-ic { width: 11px; height: 11px; color: #202124; }

/* form fields */
.field {
  position: relative;
  display: flex;
  align-items: center;
  height: 29px;
  padding: 2px 7px 0;
  border: 1px solid #70757a;
  border-radius: 4px;
  font-size: 10.400px;
  letter-spacing: 0;
}
.field-label {
  position: absolute;
  top: -7px;
  left: 4px;
  padding: 0 3px;
  background: #fff;
  line-height: 12px;
  font-size: 9.700px;
  color: #202124;
}
.field-value { flex: 1; white-space: nowrap; }
.caret { width: 14px; height: 14px; flex: none; margin-right: -2px; fill: #202124; }
.caret-gray { fill: #80868b; width: 12px; height: 12px; margin-right: 6px; }
.field-account { width: 172px; height: 29px; margin: 0 0 6px 10px; border-color: #dadce0; font-size: 10px; letter-spacing: .2px; }

/* main column */
.main { flex: 1; display: flex; flex-direction: column; min-width: 0; position: relative; }
.main-head {
  display: flex;
  align-items: center;
  flex: none;
  height: 40px;
  padding-left: 15px;
  border-bottom: 1px solid #e8eaed;
  color: #3c4043;
}
.main-back { width: 15px; height: 15px; fill: #3367d6; }
.main-title { margin-left: 21px; font-size: 13.500px; }
.learn {
  display: flex; align-items: center;
  margin-left: auto; margin-right: 22px;
  color: #3367d6; font-size: 10.500px; font-weight: 500;
}
.learn-ic { width: 12px; height: 12px; fill: #3367d6; }

.main-scroll { flex: 1; display: flex; align-items: flex-start; min-height: 0; overflow: hidden; padding-left: 19px; }
.budget-form { width: 410px; flex: none; padding-top: 20px; color: #5f6368; font-size: 11px; letter-spacing: -.27px; }
.form-title { height: 20px; line-height: 20px; font-size: 16px; letter-spacing: 0; color: #202124; }
.field-name { margin-top: 12px; }
.form-line { height: 1px; margin: 13px 0 0; border: none; background: #e8eaed; }
.row-between { display: flex; align-items: center; justify-content: space-between; }
.scope-head { height: 20px; margin-top: 18px; }
.scope-title { font-size: 14.500px; letter-spacing: 0; color: #202124; }
.chev { width: 12px; height: 12px; color: #5f6368; margin-right: 4px; flex: none; }
.chev-up { color: #202124; }
.form-text { line-height: 14px; }
.scope-text { margin-top: 11px; }
.field-time { margin-top: 18px; }
.form-hint { margin: 1px 0 0 8px; line-height: 13px; width: 392px; letter-spacing: -.64px; }
.scoped-text { margin-top: 15px; }
.field-projects { margin-top: 18px; }
.field-services { margin-top: 17px; }
.labels-row { height: 16px; margin-top: 17px; color: #202124; }
.labels-title { display: flex; align-items: center; }
.help { width: 14px; height: 14px; fill: #202124; margin-left: 3px; }
.help-gap { margin-left: 10px; }
.labels-text { margin-top: 10px; font-size: 10px; letter-spacing: -.23px; }
.credits-title { margin-top: 11px; line-height: 14px; color: #202124; }
.form-credit { line-height: 13px; letter-spacing: -.6px; }
.check-row { height: 14px; margin-top: 7px; }
.check-next { margin-top: 15px; }
.check-label { display: flex; align-items: center; color: #3c4043; }
.check { width: 13px; height: 13px; margin-right: 6px; background: #3367d6; border-radius: 1px; }
.check svg { display: block; width: 13px; height: 13px; }

/* cost trend card */
.trend-card {
  flex: none;
  width: 388px;
  height: 405px;
  margin: 20px 0 0 20px;
  padding-top: 12px;
  border-radius: 4px;
  box-shadow: 0 1px 2px rgba(60,64,67,.3);
  background: #fff;
}
.trend-title { padding-left: 26px; font-size: 15.500px; line-height: 20px; color: #202124; }
.trend-date { padding-left: 26px; margin-top: 4px; font-size: 11px; letter-spacing: .05px; line-height: 14px; color: #9aa0a6; }
.trend-chart { display: block; margin-top: 17px; }
.trend-chart text { font-family: 'Liberation Sans', sans-serif; font-size: 10px; fill: #8a8a8a; }
.axis-x text { text-anchor: middle; }
.trend-legend { display: flex; align-items: center; height: 16px; margin: 12px 0 0 23px; font-size: 10.400px; color: #5f6368; }
.legend-dot { width: 11px; height: 11px; margin-right: 5px; border-radius: 50%; background: #4285f4; }
.trend-foot {
  display: flex;
  align-items: center;
  height: 37px;
  margin-top: 24px;
  padding-left: 11px;
  border-top: 1px solid #e0e0e0;
  font-size: 10.400px;
  color: #5f6368;
}
.trend-arrow { width: 16px; height: 16px; fill: #202124; margin-right: 8px; }
.main-thumb { flex: none; width: 8px; height: 350px; margin: 0 2px 0 auto; background: #dadce0; }

.main-foot {
  display: flex;
  align-items: center;
  flex: none;
  height: 45px;
  padding-left: 19px;
  border-top: 1px solid #e8eaed;
}
.btn-save {
  width: 45px; height: 26px;
  border-radius: 3px;
  background: #3367d6;
  box-shadow: 0 1px 2px rgba(60,64,67,.4);
  color: #fff;
  font-size: 10.500px;
  font-weight: 700;
}
.btn-cancel { margin-left: 20px; background: none; color: #3c4043; font-size: 10.500px; font-weight: 500; }

/* dio */
.dio { flex: 1; display: flex; min-height: 0; background: #000; }
.dio-player { display: flex; flex-direction: column; flex: none; width: 683px; }
.dio-head {
  display: flex;
  align-items: center;
  flex: none;
  height: 49px;
  padding: 0 37px 7px 12px;
  background: #0d0d0d;
}
.dio-back { width: 12px; height: 24px; color: #fff; margin-right: 13px; flex: none; }
.dio-title { flex: 1; color: #fff; font-family: 'Open Sans', sans-serif; font-weight: 700; font-size: 14px; white-space: nowrap; }
.dio-cloud { width: 24px; height: 24px; flex: none; fill: #6a6a6a; margin-bottom: 4px; }
.dio-video { flex: 1; display: flex; align-items: center; justify-content: space-between; }
.dio-arrow {
  display: flex; align-items: center; justify-content: center;
  width: 38px; height: 47px;
  margin-bottom: 52px;
  background: #1f2329;
  color: #fff;
}
.dio-arrow svg { width: 10px; height: 18px; }
.dio-play {
  width: 0;
  height: 0;
  margin: 0 0 -1px -4px;
  border-top: 68px solid transparent;
  border-bottom: 68px solid transparent;
  border-left: 118px solid #b9711f;
}
.dio-side { display: flex; flex-direction: column; flex: none; width: 324px; background: #343434; font-family: 'Open Sans', sans-serif; font-stretch: 80%; }
.dio-tabs { display: flex; align-items: center; height: 42px; padding-left: 6px; background: #777; border-bottom: 2px solid #3a3a3a; }
.dio-tab { display: flex; align-items: center; justify-content: center; width: 149px; height: 30px; border-radius: 2px; font-size: 13px; font-weight: 700; color: #3f3f3f; }
.dio-tab + .dio-tab { width: 166px; }
.dio-tab-on { background: #1a1a1a; color: #fff; }
.dio-row {
  display: flex;
  align-items: center;
  height: 35px;
  padding-left: 17px;
  border-bottom: 2px solid #2c2c2c;
  color: #f0f0f0;
  font-size: 13px;
}
.dio-row-on { background: #1e1e1e; height: 37px; }
.dio-submit {
  width: 290px;
  height: 27px;
  margin: 12px 0 0 17px;
  border-radius: 2px;
  background: #f0432a;
  color: #fff;
  font-family: inherit;
  font-size: 11px;
  font-weight: 700;
}
.dio-scrollbar { flex: 1; background: #f1f1f1; display: flex; justify-content: center; padding-top: 8px; }
.dio-scroll-up { width: 0; height: 0; border-left: 4px solid transparent; border-right: 4px solid transparent; border-bottom: 6px solid #a3a3a3; }

/* windows taskbar */
.taskbar {
  grid-column: 1 / -1;
  display: flex;
  align-items: stretch;
  background: linear-gradient(to right, #dedede, #dcdcdc 50%, #d3d3d3);
  color: #1f1f1f;
  font-family: 'Noto Sans', sans-serif;
}
.task-start { display: flex; align-items: center; justify-content: center; flex: none; width: 48px; background: #d5d8da; }
.task-win { width: 17px; height: 17px; fill: #000; }
.task-search {
  display: flex;
  align-items: center;
  flex: none;
  width: 344px;
  margin: 1px 0;
  padding-left: 12px;
  background: #fff;
  font-size: 14.800px;
  color: #333;
  letter-spacing: -.3px;
}
.task-search > span { flex: 1; white-space: nowrap; margin-left: 8px; }
.task-lens { width: 20px; height: 20px; color: #222; }
.task-art { flex: none; }
.task-item {
  display: flex;
  align-items: center;
  justify-content: center;
  flex: none;
  width: 49px;
}
.task-ic { width: 24px; height: 24px; }
.task-line { color: #222; }
.task-gap { margin-left: 2px; }
.task-chrome { background: #ebebeb; border-bottom: 3px solid #0a78c8; margin-right: 2px; width: 45px; }
.task-app { width: 40px; margin-left: 6px; border-bottom: 3px solid #0a78c8; }
.chrome-logo {
  position: relative;
  width: 24px;
  height: 24px;
  border-radius: 50%;
  background:
    radial-gradient(circle, #3b7fe0 0 4px, #fff 4.500px 6px, transparent 6.500px),
    conic-gradient(from 30deg, #e8453c 0 120deg, #fbbc05 120deg 240deg, #34a853 240deg);
}
.chrome-badge {
  position: absolute;
  right: -4px;
  bottom: -3px;
  display: flex; align-items: center; justify-content: center;
  width: 15px; height: 15px;
  border-radius: 50%;
  background: #6b9a33;
  color: #eef6e0;
  font-size: 8px;
}
.tray { display: flex; align-items: center; margin-left: 418px; }
.tray-ic { width: 16px; height: 16px; margin: 0 4px; color: #222; flex: none; }
.task-clock { flex: none; width: 64px; padding-top: 1px; text-align: center; font-size: 13px; line-height: 19px; letter-spacing: -.4px; white-space: nowrap; }
.task-notify { position: relative; display: flex; align-items: center; flex: none; width: 53px; padding-left: 15px; border-right: 1px solid #b4b4b4; }
.notify-ic { width: 16px; height: 16px; fill: #111; margin-bottom: 2px; }
.notify-count {
  position: absolute; left: 24px; bottom: 3px;
  display: flex; align-items: center; justify-content: center;
  width: 17px; height: 17px;
  border: 1px solid #555; border-radius: 50%;
  font-size: 9px;
  background: #cfcfcf;
}
.task-second { display: flex; align-items: stretch; flex: 1; min-width: 0; padding-left: 4px; background: #d3d3d3; }
.task-start-2 { background: none; }
.task-item-2 { width: 49px; }
.task-item-3 { width: 44px; }
.task-gap-b { margin-left: 6px; }
.task-clock-2 { margin-left: auto; width: 70px; }
```
